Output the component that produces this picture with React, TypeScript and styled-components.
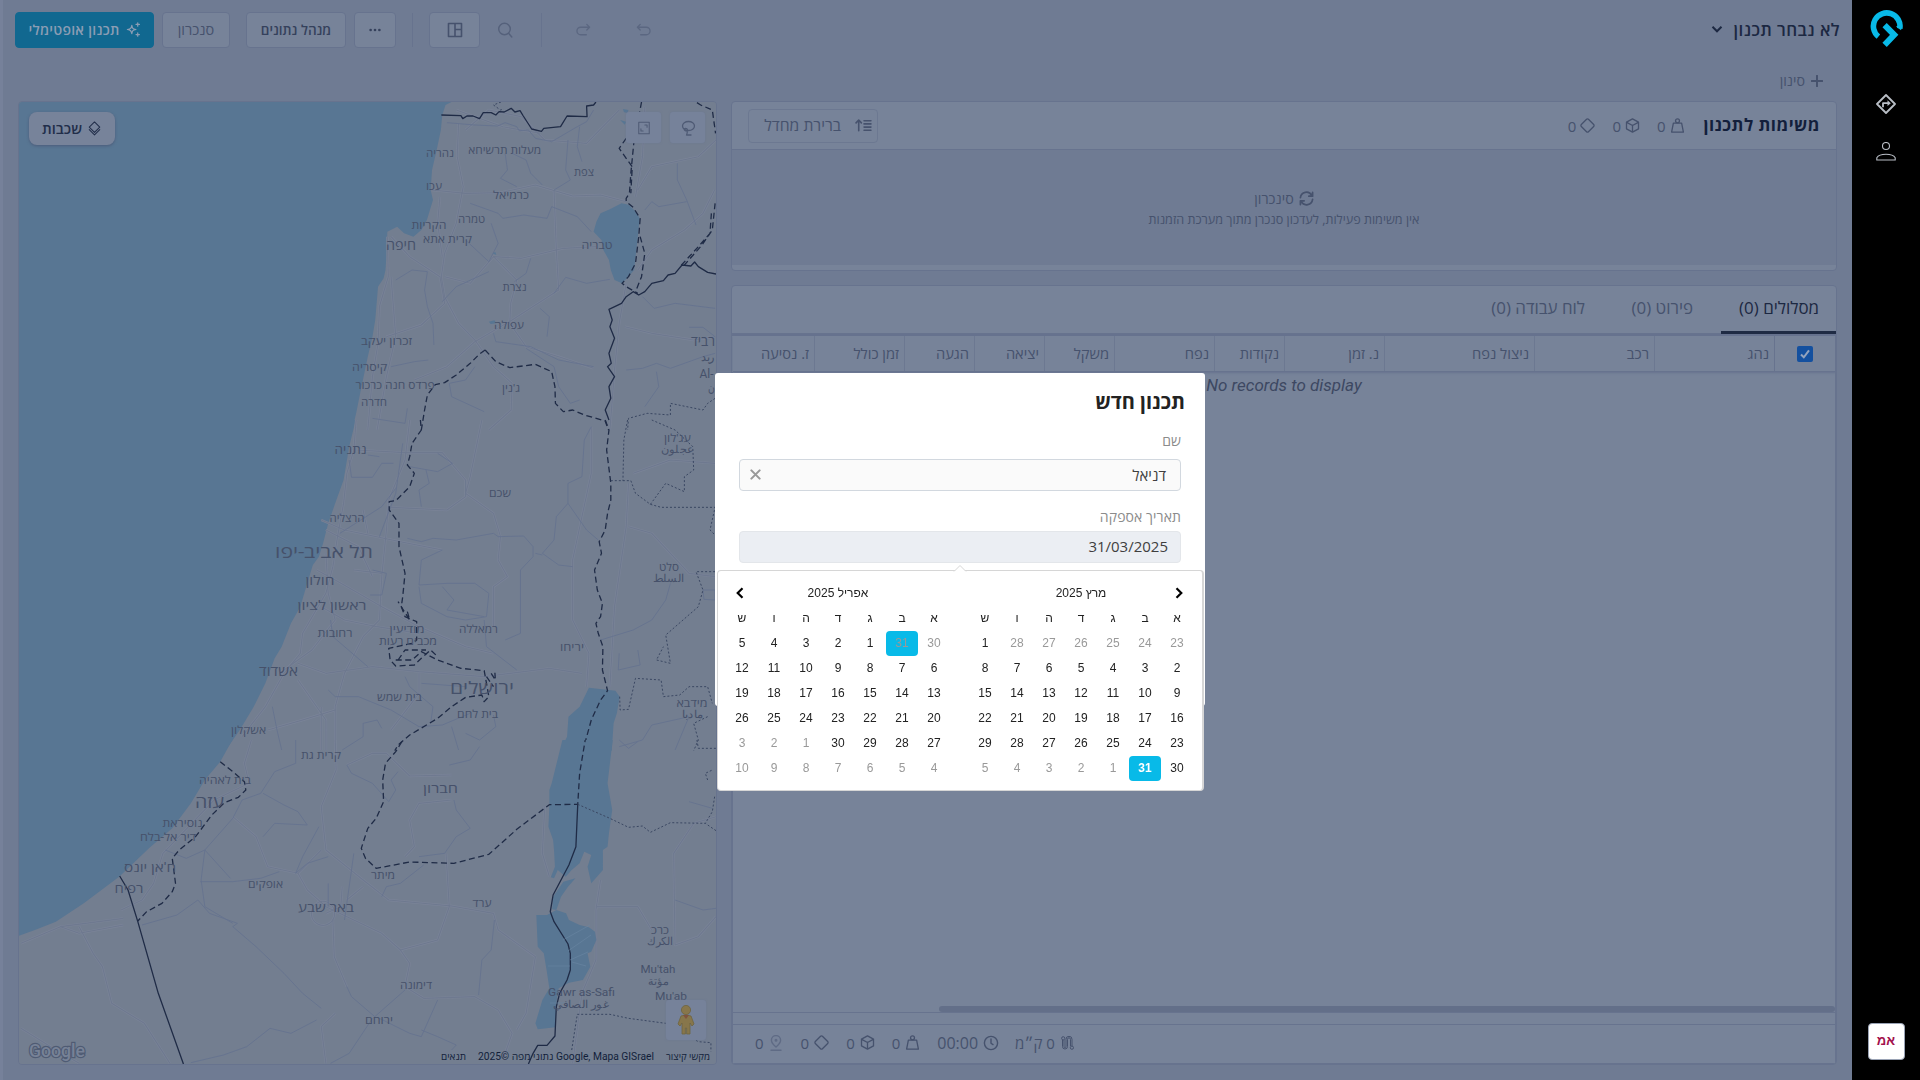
import React from 'react';
import styled, { createGlobalStyle, css } from 'styled-components';

const uiFont = '"Open Sans", "Noto Sans", "Liberation Sans", sans-serif';

const c = {
  page: '#6f7b93',
  edge: '#76819a',
  card: '#778399',
  line: '#67738e',
  lineSoft: '#6c7891',
  text: '#46526d',
  muted: '#4f5b75',
  dark: '#1c2842',
  accent: '#08bae8',
};

const GlobalStyle = createGlobalStyle`
  * { box-sizing: border-box; }
  html, body { margin: 0; padding: 0; }
  body { overflow: hidden; background: ${c.page}; font-family: ${uiFont}; }
  button, input { font-family: inherit; }
  svg { display: block; flex: none; }
`;

const Shell = styled.div`
  direction: rtl;
  display: flex;
  width: 1920px;
  height: 1080px;
  background: ${c.page};
  color: ${c.text};
`;

const Sidebar = styled.aside`
  width: 68px;
  height: 100%;
  flex: none;
  background: #000;
  display: flex;
  flex-direction: column;
  align-items: center;
  padding: 10px 0 20px;
`;

const NavItem = styled.div<{ $gap: number }>`
  margin-top: ${p => p.$gap}px;
`;

const Avatar = styled.div`
  margin-top: auto;
  width: 37px;
  height: 37px;
  border-radius: 4px;
  border: 1px solid #9aa3b5;
  background: #fff;
  color: #a3104c;
  font: bold 13px/34px "Liberation Sans", sans-serif;
  text-align: center;
`;

const Main = styled.main`
  flex: 1;
  min-width: 0;
  display: flex;
  flex-direction: column;
  border-left: 3px solid ${c.edge};
  padding: 12px 13px 15px 12px;
`;

const Toolbar = styled.header`
  display: flex;
  align-items: center;
  height: 36px;
`;

const PlanTitle = styled.h1`
  margin: -2px -1px 0 0;
  font-size: 17px;
  letter-spacing: 0.42px;
  font-weight: 600;
  color: ${c.dark};
  display: flex;
  align-items: center;
  gap: 11px;
  white-space: nowrap;
`;

const Tools = styled.div`
  margin-right: auto;
  display: flex;
  align-items: center;
`;

const Btn = styled.button<{ $w: number; $ml?: number; $primary?: boolean; $strong?: boolean }>`
  width: ${p => p.$w}px;
  height: 36px;
  margin: 0 0 0 ${p => p.$ml ?? 0}px;
  padding: 0 0 1px;
  display: flex;
  align-items: center;
  justify-content: center;
  gap: 6px;
  white-space: nowrap;
  border: 1px solid ${c.line};
  border-radius: 4px;
  background: ${c.card};
  color: ${c.text};
  font-size: 14.5px;
  ${p => p.$strong && css`font-size: 13.5px; font-weight: 600; color: #35415c;`}
  ${p => p.$primary && css`
    background: #116890;
    border-color: #116890;
    color: #8b9db4;
    font-size: 14px;
    letter-spacing: 0.25px;
    font-weight: 600;
  `}
`;

const Slot = styled.span<{ $w: number }>`
  width: ${p => p.$w}px;
  display: flex;
  justify-content: center;
`;

const Divider = styled.span<{ $ml: number }>`
  width: 1px;
  height: 34px;
  background: ${c.line};
  margin-left: ${p => p.$ml}px;
`;

const FilterBar = styled.div`
  height: 53px;
  padding: 12px 16px 0 0;
  display: flex;
  align-items: center;
  gap: 6px;
  font-size: 14.3px;
  color: ${c.text};
`;

const Content = styled.div`
  flex: 1;
  min-height: 0;
  display: flex;
  gap: 14px;
  padding: 0 2px 0 3px;
`;

const Column = styled.section`
  width: 1106px;
  flex: none;
  display: flex;
  flex-direction: column;
  gap: 14px;
`;

const Card = styled.div<{ $h?: number }>`
  ${p => (p.$h ? `height: ${p.$h}px;` : 'flex: 1;')}
  border: 1px solid ${c.line};
  border-radius: 4px;
  background: ${c.card};
  display: flex;
  flex-direction: column;
  overflow: hidden;
`;

const TasksHead = styled.div`
  height: 48px;
  flex: none;
  display: flex;
  align-items: center;
  padding: 0 16px 0 17px;
  border-bottom: 1px solid ${c.line};
`;

const TasksTitle = styled.h2`
  margin: -2px 0 0 19px;
  font-size: 17px;
  letter-spacing: 0.45px;
  font-weight: 700;
  color: #131f3c;
  white-space: nowrap;
`;

const Stat = styled.span<{ $gap?: number; $ml?: number; $size?: number }>`
  display: flex;
  align-items: center;
  gap: ${p => p.$gap ?? 4}px;
  margin-left: ${p => p.$ml ?? 17}px;
  font-size: ${p => p.$size ?? 15}px;
  white-space: nowrap;
`;

const SortButton = styled.button`
  margin: 0 auto 0 -1px;
  width: 130px;
  height: 34px;
  border: 1px solid ${c.lineSoft};
  border-radius: 4px;
  background: transparent;
  color: ${c.text};
  font-size: 15.7px;
  padding: 0 5px 1px 0;
  display: flex;
  align-items: center;
  gap: 14px;
  white-space: nowrap;
`;

const TasksBody = styled.div`
  height: 115px;
  background: ${c.page};
  display: flex;
  flex-direction: column;
  align-items: center;
  padding-top: 38px;
`;

const SyncLine = styled.div`
  height: 20px;
  display: flex;
  align-items: center;
  gap: 5px;
  font-size: 14.3px;
`;

const Hint = styled.div`
  margin-top: 2px;
  font-size: 12.6px;
  line-height: 20px;
`;

const Tabs = styled.div`
  height: 50px;
  flex: none;
  display: flex;
  border-bottom: 3px solid ${c.line};
`;

const Tab = styled.div<{ $w: number; $pad: number; $active?: boolean }>`
  width: ${p => p.$w}px;
  height: 48px;
  padding: 10px ${p => p.$pad}px 0 0;
  font-size: 16.9px;
  white-space: nowrap;
  color: ${p => (p.$active ? c.dark : c.text)};
  border-bottom: 3px solid ${p => (p.$active ? '#1f2b44' : 'transparent')};
`;

const TableHead = styled.div`
  height: 36px;
  flex: none;
  display: flex;
  margin: 0 0 0 1px;
  border-right: 1px solid ${c.line};
  border-bottom: 1px solid ${c.line};
  box-shadow: 0 1px 2px ${c.line};
`;

const Th = styled.div<{ $w: number }>`
  width: ${p => p.$w}px;
  height: 35px;
  flex: none;
  border-left: 1px solid ${c.lineSoft};
  padding-right: 5px;
  font-size: 14.7px;
  line-height: 34px;
  white-space: nowrap;
  &:last-child { border-left: 0; }
`;

const CheckTh = styled(Th)`
  display: flex;
  align-items: center;
  justify-content: center;
  padding: 0;
  border-left-color: ${c.line};
`;

const Check = styled.span`
  width: 16px;
  height: 16px;
  border-radius: 2px;
  background: #14509f;
  color: #93a3bd;
  display: flex;
  align-items: center;
  justify-content: center;
`;

const TableBody = styled.div`
  flex: 1;
  border: solid ${c.line};
  border-width: 0 1px;
  display: flex;
  flex-direction: column;
  align-items: center;
`;

const Empty = styled.div`
  direction: ltr;
  padding-top: 3px;
  font: italic 17px/20px Roboto, sans-serif;
  color: #3d4862;
`;

const Scrollbar = styled.div`
  margin-top: auto;
  align-self: stretch;
  height: 7px;
  border-bottom: 1px solid ${c.line};
`;

const Thumb = styled.div`
  width: 896px;
  height: 6px;
  border-radius: 3px;
  background: #636f89;
`;

const Footer = styled.div`
  height: 51px;
  flex: none;
  padding-top: 11px;
  border: solid ${c.line};
  border-width: 0 1px 1px;
`;

const Totals = styled.div`
  direction: ltr;
  height: 38px;
  border-top: 1px solid ${c.line};
  display: flex;
  align-items: center;
  padding: 0 0 2px 22px;
`;

const MapCard = styled.div`
  position: relative;
  flex: 1;
  height: 964px;
  border: 1px solid ${c.line};
  border-radius: 4px;
  overflow: hidden;
`;

const MapCanvas = styled.svg`
  position: absolute;
  left: 0;
  top: 0;
`;

const LayersButton = styled.div`
  position: absolute;
  left: 10px;
  top: 10px;
  width: 86px;
  height: 33px;
  padding-bottom: 1px;
  border-radius: 8px;
  background: #77839a;
  box-shadow: 0 1px 3px #4b5c7a;
  display: flex;
  align-items: center;
  justify-content: center;
  gap: 5px;
  color: #222e4a;
  font-size: 14.6px;
  font-weight: 600;
`;

const MapButton = styled.div<{ $left: number; $top: number; $h: number }>`
  position: absolute;
  left: ${p => p.$left}px;
  top: ${p => p.$top}px;
  width: ${p => (p.$h > 35 ? 40 : 35)}px;
  height: ${p => p.$h}px;
  border-radius: 3px;
  background: #76829a;
  box-shadow: 0 0 2px #6b7790;
  display: flex;
  align-items: center;
  justify-content: center;
  color: ${c.muted};
`;

const Modal = styled.div`
  position: fixed;
  left: 715px;
  top: 373px;
  width: 490px;
  height: 333px;
  border-radius: 3px;
  background: #fff;
  padding: 15px 24px 0;
  direction: rtl;
`;

const ModalTitle = styled.h2`
  margin: 0 -4px 0 0;
  font-size: 20px;
  line-height: 28px;
  font-weight: 680;
  color: #222;
`;

const Label = styled.label<{ $mt: number }>`
  display: block;
  margin-top: ${p => p.$mt}px;
  font-size: 14px;
  letter-spacing: 0.1px;
  line-height: 20px;
  color: #8b8b8b;
`;

const Field = styled.div<{ $mt: number; $filled?: boolean }>`
  margin-top: ${p => p.$mt}px;
  height: 32px;
  border: 1px solid ${p => (p.$filled ? '#e3e6ea' : '#d2d8df')};
  border-radius: 4px;
  background: ${p => (p.$filled ? '#ebeef3' : '#fafafa')};
  display: flex;
  align-items: center;
  justify-content: space-between;
  padding: 0 14px 1px 10px;
  font-size: 15px;
  color: #3f3f3f;
`;

const DateText = styled.span`
  font-size: 15px;
  margin-right: -2px;
  padding-bottom: 1px;
`;

const Picker = styled.div`
  position: fixed;
  left: 717px;
  top: 570px;
  width: 487px;
  height: 221px;
  border: 1px solid #d6d6d6;
  border-right-width: 2px;
  border-radius: 4px;
  background: #fff;
  direction: rtl;
  padding: 10px 9px 0 8px;
  display: flex;
  justify-content: space-between;
  font-family: "Liberation Sans", sans-serif;
  font-size: 12px;
  color: #222;
`;

const Caret = styled.svg`
  position: absolute;
  left: 235px;
  top: -7px;
`;

const Month = styled.div`
  width: 224px;
`;

const MonthHead = styled.div`
  height: 25px;
  line-height: 25px;
  display: grid;
  grid-template-columns: 32px 1fr 32px;
  text-align: center;
`;

const Arrow = styled.span<{ $side?: 'next' | 'prev' }>`
  display: flex;
  align-items: center;
  justify-content: center;
  padding: 0 0 2px;
  ${p => p.$side === 'next' && css`padding-left: 3px;`}
  ${p => p.$side === 'prev' && css`padding-right: 2px;`}
  color: #000;
`;

const Grid = styled.div`
  display: grid;
  grid-template-columns: repeat(7, 32px);
`;

const Day = styled.span<{ $off?: boolean; $sel?: boolean; $bold?: boolean }>`
  height: 25px;
  line-height: 24px;
  text-align: center;
  border-radius: 4px;
  color: ${p => (p.$off ? '#999' : '#222')};
  ${p => p.$sel && css`background: ${c.accent};`}
  ${p => p.$bold && css`color: #fff; font-weight: bold;`}
`;

type IconProps = { size?: number; sw?: number; color?: string; children?: React.ReactNode };
const Icon = ({ size = 16, sw = 1.4, color = 'currentColor', children }: IconProps) => (
  <svg width={size} height={size} viewBox="0 0 16 16" fill="none" stroke={color} strokeWidth={sw} strokeLinecap="round" strokeLinejoin="round">
    {children}
  </svg>
);

const WeightIcon = (p: IconProps) => (
  <Icon {...p}><circle cx="8" cy="3" r="2.1" /><path d="M3.6 5.4h8.8L14.3 15H1.7z" /></Icon>
);
const CubeIcon = (p: IconProps) => (
  <Icon {...p}><path d="M8 .9 14.4 4.4v7.2L8 15.1 1.6 11.6V4.4zM1.8 4.6 8 8l6.2-3.4M8 8v7" /></Icon>
);
const DiamondIcon = (p: IconProps) => (
  <Icon {...p}><path d="M7 1.4a1.4 1.4 0 0 1 2 0L14.6 7a1.4 1.4 0 0 1 0 2L9 14.6a1.4 1.4 0 0 1-2 0L1.4 9a1.4 1.4 0 0 1 0-2z" /></Icon>
);
const ClockIcon = (p: IconProps) => (
  <Icon {...p}><circle cx="8" cy="8" r="6.6" /><path d="M8 4v4.2l2 1.4" /></Icon>
);
const RouteIcon = () => (
  <svg width="13" height="14" viewBox="0 0 13 14" fill="none" stroke="currentColor" strokeWidth="1">
    <circle cx="2.200" cy="2.300" r="1.600" /><circle cx="10.900" cy="11.700" r="1.600" />
    <path d="M1.500 4v6.500a2.500 2.500 0 0 0 5 0V3.300a1.500 1.500 0 0 1 3 0V10M3 4v6.500a1 1 0 0 0 2 0V3.300a3 3 0 0 1 6 0V10" />
  </svg>
);
const PinIcon = (p: IconProps) => (
  <Icon {...p}><path d="M8 12C5 9.400 3.400 7.400 3.400 5.200a4.600 4.600 0 0 1 9.200 0C12.600 7.400 11 9.400 8 12z" /><circle cx="8" cy="5.200" r=".8" fill="currentColor" /><path d="M3 15.200h10" /></Icon>
);
const SyncIcon = () => (
  <Icon size={15} sw={1.8}><path d="M1.500 7A6.500 6.500 0 0 1 13.600 4.600M14.500 1.500v4h-4M14.500 9A6.500 6.500 0 0 1 2.400 11.400M1.500 14.500v-4h4" /></Icon>
);
const SparkIcon = () => (
  <Icon size={15} sw={1.3}>
    <path d="M6.200 3.500C6.800 6.800 7.200 7.400 10.600 8 7.200 8.700 6.800 9.200 6.200 12.500 5.500 9.200 5 8.700 1.500 8 5 7.400 5.500 6.800 6.200 3.500zM12.500.8v3.600M10.700 2.600h3.600M12.500 11.600v3.600M10.700 13.400h3.600" />
  </Icon>
);
const LayersIcon = () => (
  <Icon size={15} sw={1.1}><path d="M8 1 13.600 6.600 8 12.200 2.400 6.600zM2.400 9.200 8 14.800l5.600-5.600" /></Icon>
);
const Chevron = ({ size, d, sw }: { size: number; d: string; sw: number }) => (
  <svg width={size} height={size} viewBox="0 0 12 12" fill="none" stroke="currentColor" strokeWidth={sw}><path d={d} /></svg>
);

const Logo = () => (
  <svg width="36" height="38" viewBox="-2 0 36 38" fill="none" stroke={c.accent}>
    <path d="M8.400 26.600A13.300 13.300 0 1 1 29.800 18.500" strokeWidth="5.600" />
    <path d="m26 16.500 5 3.700q1.300-2.600 1.200-6z" fill={c.accent} stroke="none" />
    <path d="M14.600 15.200 24.200 24.800 14.600 34.800" strokeWidth="6" />
  </svg>
);
const DirectionsIcon = () => (
  <svg width="20" height="20" viewBox="0 0 20 20" fill="none" stroke="#b9bec6" strokeWidth="1.800" strokeLinejoin="round">
    <path d="M10 1 19 10 10 19 1 10z" /><path d="M7 13.200V9.200h5" /><path d="m11.500 6.300 3.300 2.900-3.300 2.900z" fill="#b9bec6" stroke="none" />
  </svg>
);
const PersonIcon = () => (
  <svg width="20" height="19" viewBox="0 0 20 19" fill="none" stroke="#b9bec6" strokeWidth="1.100">
    <circle cx="10" cy="4" r="3.500" /><path d="M.8 18v-2.200C2.500 13 6.500 12.300 10 12.300s7.500.7 9.200 3.500V18z" />
  </svg>
);

/* Each tile keeps its own survey grid; the transform projects it onto the map pane. */
const tileScale = 730 / 1568;
type Tile = { y: number; sea: string; lakes: string[]; roads: string[]; minor: string[]; solid: string[]; dashed: string[]; dotted: string[] };
const tiles: Tile[] = [
  {
    y: 90,
    sea: 'M38 30H978L957 45 950 75 947 120 938 180 928 240 925 300 930 330 917 390 905 420 888 440 868 430 853 410 832 425 830 500 828 540 824 565 812 590 806 690 800 740 790 800 775 900 765 970 756 1022H38Z',
    lakes: [
      'M1335 340 1350 344 1366 365 1374 385 1370 440 1366 490 1362 540 1350 560 1336 580 1320 570 1312 540 1308 510 1296 480 1292 450 1275 425 1281 395 1290 370 1310 358Z',
      'M1338 57 1350 60 1348 70 1340 66Z', 'M1332 90 1345 95 1342 104Z', 'M1050 695 1062 691 1066 700 1054 702Z', 'M1058 490 1064 486 1066 495Z',
    ],
    roads: [
      'M985 100 982 200 995 290 980 400 955 490 948 560 955 620 985 700 1020 750 1060 830 1100 880 1098 960 1050 1020',
      'M832 440 834 560 815 650 812 760 800 860 790 1020', 'M928 300 1000 310 1075 308 1150 285 1230 318 1290 315 1345 335',
      'M955 560 1010 580 1060 500 1120 505 1210 475 1280 470M1370 540 1400 480 1470 420 1510 370 1535 300',
      'M1060 500 1110 570 1097 640 1095 700 1130 770 1200 800 1275 835', 'M1190 300 1195 480 1200 600 1100 690 1020 755 960 830 890 870',
      'M830 740 905 705 955 640 945 560 880 500 840 440', 'M1370 300 1400 230 1500 200 1538 150', 'M1345 580 1330 700 1320 840 1310 1020',
      'M1342 710 1400 730 1490 750 1536 740', 'M840 560 850 740 830 860 810 1020', 'M945 320 940 400 950 500',
      'M1000 120 1050 60 1120 80 1170 150 1260 160 1330 60', 'M980 60 1080 110 1160 130', 'M1385 50 1380 200 1365 320',
    ],
    minor: [
      'M960 98 1020 105 1068 108 1085 98 1110 110 1115 122 1135 120 1150 145 1185 155 1240 110 1260 95 1275 60',
      'M1100 190 1130 210 1140 250 1165 285M1085 190 1090 240 1075 265 1110 290', 'M1010 340 1070 370 1080 385 1125 375 1175 385 1185 350 1240 380 1270 425',
      'M1055 400 1070 460 1050 515 1000 450M1140 505 1130 550 1105 575', 'M850 570 885 540 918 545 912 600 918 650 930 700 932 765',
      'M1455 220 1455 270 1475 330 1495 405M1385 360 1400 335 1415 350 1475 335', 'M1190 610 1215 562 1260 580 1310 568',
      'M1160 655 1180 680 1175 740M1060 730 1065 755 1140 770 1200 810 1275 830', 'M1130 775 1190 830 1200 890 1225 940 1245 930',
      'M1345 840 1380 835 1410 820 1440 835 1510 800 1536 790', 'M1380 620 1405 655 1450 640 1536 655', 'M1020 830 1000 870 965 880 970 920 1040 965',
      'M800 985 870 1000 875 955M840 830 890 815 920 810M1410 845 1415 890 1385 950', 'M1245 110 1240 170 1250 215M1220 150 1215 240 1225 270 1190 300',
      'M1480 712 1510 712 1536 740M950 635 980 590 1050 545',
    ],
    solid: [
      'M948 75 990 77 994 86 1003 78 1016 78 1030 86 1038 68 1055 68 1065 75 1072 65 1083 66 1098 55 1106 66 1117 62 1124 78 1142 117 1163 124 1168 115 1204 110 1218 78 1261 80 1260 48 1275 45 1280 36',
      'M1538 552 1520 547 1500 530 1492 516 1484 528 1465 525 1450 550 1435 555 1425 572 1400 580 1385 605 1372 615 1360 605 1345 620 1335 640 1308 658 1315 690 1310 710 1320 745 1308 790 1313 820 1305 830 1320 860 1308 890 1312 925 1300 960 1308 990',
    ],
    dashed: [
      'M1378 36 1372 80 1362 150 1355 250 1352 310 1345 325 1345 335 1360 352 1375 385 1372 440 1365 520 1350 560 1336 580 1345 590 1370 610', 'M1345 145 1330 175 1345 205 1358 230 1355 310',
      'M1375 440 1385 490 1378 560 1365 605', 'M1497 38 1505 45 1530 60 1537 130', 'M1536 340 1530 420 1508 465 1470 525M1528 370 1525 430 1500 470 1462 528',
      'M1042 780 1030 792 1010 820 980 855 955 878 935 884 918 915 912 960 905 1020', 'M1042 780 1065 815 1095 833 1150 823 1185 845 1192 890 1193 940 1210 965 1230 960 1255 975 1300 993 1307 1020',
    ],
    dotted: ['M1076 36 1060 45 1075 60 1082 57', 'M1536 925 1520 940 1510 960 1440 940 1440 975 1390 970 1350 985 1348 1020'],
  },
  {
    y: 420,
    sea: 'M38 0H764L750 80 738 180 720 250 705 310 694 370 685 410 672 435 660 490 645 560 625 610 605 680 590 715 570 790 545 860 515 930 484 992H38Z',
    lakes: ['M1265 803 1322 812 1331 830 1325 880 1318 910 1314 992H1203L1218 950 1221 890 1245 860Z'],
    roads: [
      'M765 0 760 90 745 160 738 250 725 350 715 440 700 520 650 640 645 700 610 760 570 860 520 950', 'M880 0 870 120 835 240 830 330 820 470 815 600 780 650 740 760 720 860 720 990',
      'M690 300 740 330 860 365 950 390', 'M765 90 870 98 950 98 1000 180 1000 230 960 270 840 262', 'M1035 0 1010 170 1000 220 1060 280 1075 350 1070 420 1090 470 1060 500 1060 620',
      'M680 450 720 480 770 520 820 560 900 620 1000 680 1060 700', 'M690 560 740 600 810 620 900 640', 'M640 730 700 760 800 740 900 755 1040 770 1180 745 1250 760',
      'M700 400 705 520 720 600 670 690 600 760', 'M1350 190 1345 320 1320 560 1310 800', 'M1350 320 1400 340 1480 460 1536 470', 'M1270 20 1270 160 1230 420 1230 600 1265 700 1260 800',
      'M575 930 650 900 720 870M690 860 690 990M640 780 700 900 700 990', 'M1360 160 1440 120 1536 130', 'M840 930 900 820 900 760', 'M780 270 790 340M760 450 820 460M700 330 770 380 800 470',
    ],
    minor: [
      'M750 120 755 172 800 172 820 130 845 130M790 105 815 110', 'M880 140 940 155 972 130 940 100M865 70 850 220 815 350', 'M915 150 922 190 900 210 905 260',
      'M875 355 905 365 930 355 980 360 1060 340 1070 350 1125 348 1145 380 1145 410 1118 450 1118 640 1085 660', 'M1270 20 1255 60 1250 170 1220 190 1220 250 1195 290 1190 360 1165 400 1200 435 1230 440',
      'M1220 250 1260 330 1285 360M950 390 905 420 900 495 960 490 1020 490 1050 520 1045 590 1000 600 960 590 905 550 900 500', 'M950 500 975 540 960 570 1040 590',
      'M1440 490 1430 540 1400 600 1360 630 1290 660', 'M1330 700 1328 750 1375 735 1370 690', 'M1040 600 1045 680 1110 750', 'M710 600 715 650 790 740M800 450 830 460 820 525 795 525',
      'M705 810 720 830 770 830 840 870 900 920 950 915 1010 880', 'M870 770 880 800 930 860 925 910M905 790 1000 800', 'M585 860 595 930 605 990M735 990 780 950 780 910 810 900 820 925',
      'M1060 885 1065 920 1030 960 1000 940M970 920 985 990', 'M730 340 820 260 850 205M1330 980 1380 960 1400 915 1480 890 1450 990', 'M1510 510 1536 510 1536 540 1512 538ZM1150 400 1165 405',
    ],
    solid: [],
    dashed: [
      'M903 0 905 30 885 70 880 110 875 135 890 160 880 200 850 242 836 245 836 270 857 310 857 380 870 460 865 530 862 560 870 590 895 605 895 660 885 670 835 685 838 720 850 738 890 735 905 715 925 690 940 710',
      'M875 575 880 600 855 545M855 720 870 690 915 690M850 720 885 720 905 695 940 720 990 745 1040 752 1045 790 1050 830 1040 845 1035 825 1000 832 970 860 940 895 880 945 855 975 848 992', 'M1055 760 1064 780 1063 758M1045 770 1060 800',
      'M1300 0 1308 30 1303 90 1312 190 1312 240 1305 280 1300 330 1287 365 1292 400 1277 450 1283 510 1294 550 1290 590 1280 610 1285 640 1295 680 1294 750 1305 812 1290 840 1270 900 1252 992',
    ],
    dotted: [
      'M1312 182 1355 182 1365 220 1397 253 1430 190 1470 215 1470 170 1490 150 1488 80 1450 30 1400 0', 'M1397 253 1420 262 1536 262 1525 330 1536 345', 'M1536 455 1495 455 1510 510 1500 560 1430 645 1440 730 1410 720 1425 680',
      'M1348 0 1340 60 1338 182', 'M1331 830 1332 870 1350 868 1365 775 1420 780 1425 830 1460 825 1480 800 1520 800 1530 850', 'M1520 890 1490 910 1500 960 1490 992',
    ],
  },
  {
    y: 740,
    sea: 'M38 0H499L473 65 440 120 410 190 370 265 320 325 256 410 180 490 120 545 75 570 40 588H38Z',
    lakes: [
      'M1208 0H1316L1305 130 1315 210 1308 280 1305 320 1295 330 1295 390 1270 430 1262 380 1270 345 1255 335 1245 370 1228 390 1215 410 1198 390 1190 415 1183 412 1192 380 1190 330 1188 300 1178 260 1180 200 1180 150 1185 130Z',
      'M1210 425 1236 415 1220 440 1205 470 1195 510 1186 508 1188 470Z',
      'M1152 525H1175L1195 510 1216 520 1222 540 1245 555 1265 562 1278 575 1281 600 1270 635 1262 640 1268 680 1252 720 1222 728 1200 745 1195 790 1193 862 1155 868 1150 850 1165 780 1180 745 1174 690 1168 640 1155 620Z',
    ],
    roads: [
      'M540 0 525 70 535 130 460 180 350 340 330 430 305 480 260 510', 'M45 610 130 560 265 535M130 560 170 580 265 555M170 560 200 640 220 680 240 790 310 850 365 970',
      'M720 0 722 90 690 200 700 330 780 420 835 480 970 498 1060 520 1070 570 1150 650', 'M500 230 550 290 575 380 640 400 690 330', 'M640 400 660 450 700 500 760 540 820 580 860 630 880 670 870 740 910 775 1020 770 1070 810 1100 880 1080 960',
      'M745 75 800 40 830 40 880 108 970 105M970 180 900 190 880 240 890 320 870 350', 'M958 340 965 500 940 600 860 630', 'M715 540 718 650 745 740', 'M720 820 690 860 700 970', 'M1170 200 1165 340 1180 410M1290 420 1280 510 1280 660 1250 760 1230 970',
      'M1280 500 1370 500 1400 570M1538 530 1500 590 1450 615 1447 340 1490 250 1538 230', 'M735 440 732 500 700 520M680 490A25 36 0 1 1 679 491', 'M1150 650 1130 820 1110 870', 'M45 865 120 930 170 970', 'M780 440 745 480',
    ],
    minor: [
      'M635 0 635 70 590 95 560 160 520 180 500 235 440 330 432 420 440 500 500 550', 'M565 160 610 195 640 215 660 255 590 250 565 290', 'M685 260 650 350 635 400M705 350 660 370 635 400',
      'M745 75 755 100 800 130 835 185 850 150 840 120 855 95', 'M1030 20 1010 60 965 75M975 180 980 210 1010 265 980 290 955 340 900 350', 'M430 425 500 425 560 415 600 395M495 415 440 330 400 355 355 330',
      'M305 555 380 525 425 480 450 520 510 550 500 560 550 620 610 700 650 760 690 805', 'M680 840 625 880 580 865 530 920 480 945 410 968', 'M745 740 755 770 805 830 870 750M800 835 750 940 710 970',
      'M815 835 880 880 905 890 940 780M905 870 940 890 980 915 970 930', 'M1062 540 1055 630 1035 660 1028 765', 'M820 470 830 440 860 430 910 375', 'M1480 185 1530 205M1450 480 1510 510 1538 505M1330 0 1350 25 1370 5', 'M760 340 740 540M705 430 705 500',
    ],
    solid: [
      'M257 408 275 450 296 545 340 760 394 972', 'M1241 193 1237 320 1222 375 1188 465 1182 515 1190 545 1220 612 1225 640 1225 690 1218 720 1202 760 1195 800 1192 888 1175 916 1155 916 1145 940 1135 972',
    ],
    dashed: [
      'M473 65 500 95 525 125 528 150 512 172 482 188 455 225 420 290 385 330 370 355 377 430 370 455 348 490 315 515 296 543',
      'M863 5 850 35 828 70 822 120 824 185 808 235 790 265 776 325 785 355 808 385 880 366 975 370 1050 343 1110 268 1180 194 1241 193 1245 100 1257 0',
    ],
    dotted: ['M1241 193 1310 235 1350 262 1380 258 1397 277 1440 248 1515 250 1538 272', 'M1535 170 1530 215 1515 250', 'M1228 930 1240 823 1310 823 1350 835 1430 850 1500 905 1527 908 1527 935', 'M1497 0 1500 25 1538 25M1520 120 1515 100 1530 90'],
  },
];

const labels: [string, number, number, number, number][] = [
  ['נהריה', 440, 157, 28, 11], ['מעלות תרשיחא', 504.700, 154, 73, 11], ['צפת', 584, 176, 20, 11], ['עכו', 434, 190, 16, 11], ['כרמיאל', 511, 199, 36, 11],
  ['טמרה', 471.600, 223, 27, 11], ['הקריות', 429, 229, 35, 11], ['קרית אתא', 447.500, 243, 49, 11], ['חיפה', 401, 250, 30, 14], ['טבריה', 597, 249, 31, 11],
  ['נצרת', 514.500, 291, 24, 11], ['עפולה', 509, 329, 30, 11], ['זכרון יעקב', 386.500, 345, 51, 11], ['קיסריה', 369.600, 371, 35, 11], ['פרדס חנה כרכור', 395, 389, 79, 11],
  ['חדרה', 374, 406, 26, 11], ["ג'נין", 511, 392, 18, 11], ['רביד', 703, 346, 24, 14], ['ربد', 708, 361, 14, 12], ['Al-', 706.500, 378, 14, 12], ['ن', 711, 392, 7, 12],
  ['נתניה', 350.600, 454, 32, 13], ['הרצליה', 347, 522, 35, 11], ['תל אביב-יפו', 324, 558, 98, 17], ['חולון', 320, 585, 29, 13], ['ראשון לציון', 332, 610, 69, 13],
  ['רחובות', 335, 637, 35, 11], ['אשדוד', 278.500, 676, 39, 14], ['אשקלון', 248.600, 734, 35, 11], ['שכם', 500, 497, 22, 11], ['מודיעין', 407, 633, 35, 11], ['מכבים רעות', 408, 645, 58, 11],
  ['רמאללה', 478.500, 633, 39, 11], ['ירושלים', 482, 694, 64, 17], ['בית שמש', 399.500, 701, 45, 11], ['בית לחם', 477.600, 718, 41, 11], ['יריחו', 572, 651, 24, 11],
  ["עג'לון", 677.500, 442, 27, 11], ['عجلون', 677.500, 453, 33, 11], ['סלט', 669, 571, 20, 11], ['السلط', 668.500, 582, 31, 11], ['מידבא', 692, 707, 31, 11], ['مادبا', 692.500, 718, 21, 11],
  ['קרית גת', 321, 759, 40, 11], ['בית לאהיה', 225, 784, 52, 11], ['עזה', 209.500, 808, 29, 17], ['נוסיראת', 182.500, 827, 40, 11], ['דיר אל-בלח', 168, 841, 56, 11],
  ["ח'אן יונס", 150, 872, 52, 13], ['רפיח', 129, 893, 29, 13], ['אופקים', 265.500, 888, 35, 11], ['באר שבע', 326, 912, 56, 13], ['חברון', 440.500, 793, 35, 13], ['מיתר', 383, 879, 24, 11],
  ['ערד', 482, 907, 19, 11], ['דימונה', 416, 989, 32, 11], ['ירוחם', 379, 1024, 28, 11], ['כרכ', 660, 934, 18, 11], ['الكرك', 660, 945, 26, 11], ["Mu'tah", 658, 973, 35, 11],
  ['مؤتة', 658, 985, 21, 11], ['Gawr as-Safi', 581.500, 996, 67, 11], ['غور الصافي', 581, 1008, 56, 11], ["Mu'ab", 671, 1000, 32, 11],
];

const Paths = ({ list }: { list: string[] }) => (
  <>{list.map(d => <path key={d} d={d} vectorEffect="non-scaling-stroke" />)}</>
);

const MapPane = () => (
  <MapCard>
    <MapCanvas width="698" height="962" viewBox="19 102 698 962" direction="ltr" fontFamily='Roboto, "Open Sans", "Noto Sans", sans-serif'>
      <rect x="0" y="90" width="730" height="990" fill="#737e90" />
      {tiles.map(t => (
        <g key={t.y} transform={`translate(0 ${t.y}) scale(${tileScale} ${1 / 3})`} fill="none" strokeLinejoin="round">
          <path d={t.sea} fill="#587693" />
          <g stroke="#7b8498" strokeWidth="2.400"><Paths list={t.roads} /></g>
          <g stroke="#6e798f" strokeWidth="1.100"><Paths list={t.roads} /></g>
          <g stroke="#65738f" strokeWidth="0.900"><Paths list={t.minor} /></g>
          {t.lakes.map(d => <path key={d} d={d} fill="#587693" />)}
          <g stroke="#1f2b46" strokeWidth="1.300"><Paths list={t.solid} /></g>
          <g stroke="#1f2b46" strokeWidth="1.300" strokeDasharray="6 3.500"><Paths list={t.dashed} /></g>
          <g stroke="#3a4762" strokeWidth="1" strokeDasharray="2 2"><Paths list={t.dotted} /></g>
        </g>
      ))}
      <g stroke="#6a87a3" strokeWidth=".6"><path d="M563 940 590 925M568 951 591 935M570 960 588 952M548 966H570M550 1003H566M572 962 586 966" /></g>
      <g textAnchor="middle" fill="#46516a">
        {labels.map(([t, x, y, w, s]) => (
          <text key={t} x={x} y={y} fontSize={s} textLength={w} lengthAdjust="spacingAndGlyphs">{t}</text>
        ))}
      </g>
      <text x="29" y="1057" fontSize="19" fontWeight="500" fill="#778297" stroke="#4f5b73" strokeWidth="2.400" paintOrder="stroke" textLength="56" lengthAdjust="spacingAndGlyphs">Google</text>
      <g fontSize="10" fill="#121e3a" textAnchor="middle">
        <text x="453.500" y="1060" textLength="25" lengthAdjust="spacingAndGlyphs">תנאים</text>
        <text x="566" y="1060" textLength="176" lengthAdjust="spacingAndGlyphs">נתוני מפה ©2025 Google, Mapa GISrael</text>
        <text x="688" y="1060" textLength="44" lengthAdjust="spacingAndGlyphs">מקשי קיצור</text>
      </g>
    </MapCanvas>
    <LayersButton><LayersIcon />שכבות</LayersButton>
    <MapButton $left={607} $top={10} $h={31}>
      <Icon size={14} sw={1.200}><path d="M2 1.500h12v13H2zM9 4.500h2.500V7M4.500 9v2.500H7" /></Icon>
    </MapButton>
    <MapButton $left={651} $top={10} $h={31}>
      <Icon size={16} sw={1.300}><ellipse cx="8.500" cy="6" rx="6" ry="4.500" /><path d="M4.500 9c-.6 1.600 1.700 2.400 2.600 1.200S6 8 5 8.600M7.200 10.500c.2 1.500.2 3-.7 4.500H11" /></Icon>
    </MapButton>
    <MapButton $left={647} $top={898} $h={40}>
      <svg width="18" height="30" viewBox="0 0 18 30" fill="#87764b" stroke="#6f6440" strokeWidth=".8">
        <path d="M4 11q5-2 10 0l3 8-2 2-2-3v11H9.600v-6H8.400v6H5V18l-2 3-2-2z" /><circle cx="9" cy="5" r="4.600" /><path d="m6 10 3 4 3-4z" fill="#80533f" stroke="none" />
      </svg>
    </MapButton>
  </MapCard>
);

const columns: [string, number][] = [
  ['נהג', 120], ['רכב', 120], ['ניצול נפח', 150], ['נ. זמן', 100], ['נקודות', 70], ['נפח', 100],
  ['משקל', 70], ['יציאה', 70], ['הגעה', 70], ['זמן כולל', 90], ['ז. נסיעה', 80],
];

const weekdays = ['א', 'ב', 'ג', 'ד', 'ה', 'ו', 'ש'];

const range = (from: number, to: number) => Array.from({ length: to - from + 1 }, (_, i) => from + i);

type MonthViewProps = { title: string; before: number[]; days: number; after: number[]; selected: number; side: 'prev' | 'next' };
const MonthView = ({ title, before, days, after, selected, side }: MonthViewProps) => {
  const cells = [
    ...before.map(n => ({ n, off: true })),
    ...range(1, days).map(n => ({ n, off: false })),
    ...after.map(n => ({ n, off: true })),
  ];
  return (
    <Month>
      <MonthHead>
        <Arrow $side="next">{side === 'next' && <Chevron size={12} sw={2.200} d="M3.500 1.200 8.300 6 3.500 10.800" />}</Arrow>
        <span>{title}</span>
        <Arrow $side="prev">{side === 'prev' && <Chevron size={12} sw={2.200} d="M7.500 1.200 2.700 6 7.500 10.800" />}</Arrow>
      </MonthHead>
      <Grid>
        {weekdays.map(d => <Day key={d}>{d}</Day>)}
        {cells.map((cell, i) => (
          <Day key={i} $off={cell.off} $sel={i === selected} $bold={i === selected && !cell.off}>{cell.n}</Day>
        ))}
      </Grid>
    </Month>
  );
};

export default function App() {
  return (
    <Shell>
      <GlobalStyle />
      <Sidebar>
        <Logo />
        <NavItem $gap={46}><DirectionsIcon /></NavItem>
        <NavItem $gap={28}><PersonIcon /></NavItem>
        <Avatar>אמ</Avatar>
      </Sidebar>
      <Main>
        <Toolbar>
          <PlanTitle>
            לא נבחר תכנון
            <Chevron size={12} sw={2} d="M1.500 3.800 6 8.300 10.500 3.800" />
          </PlanTitle>
          <Tools>
            <Slot $w={61}><Icon size={15} color="#5b6781"><path d="M4.500 1.500 1.500 4.500l3 3M1.500 4.500H11a3.500 3.500 0 0 1 0 8H5" /></Icon></Slot>
            <Slot $w={60}><Icon size={15} color="#5b6781"><path d="m11.500 1.500 3 3-3 3M14.500 4.500H5a3.500 3.500 0 0 0 0 8h6" /></Icon></Slot>
            <Slot $w={11} />
            <Divider $ml={27} />
            <Slot $w={18}><Icon size={16} color="#55617b"><circle cx="7.500" cy="7" r="5.800" /><path d="m11.800 11.500 3 3.500" /></Icon></Slot>
            <Slot $w={16} />
            <Btn $w={51} $ml={16}><Icon size={16} sw={1.600} color="#46526d"><path d="M1.500 1.500h13v13h-13zM8 1.500v13M8 7.500h6.500" /></Icon></Btn>
            <Divider $ml={16} />
            <Btn $w={42} $ml={8}><Icon size={14} sw={0} color="#35415c"><g fill="#35415c"><circle cx="3" cy="8" r="1.500" /><circle cx="8" cy="8" r="1.500" /><circle cx="13" cy="8" r="1.500" /></g></Icon></Btn>
            <Btn $w={100} $ml={16} $strong>מנהל נתונים</Btn>
            <Btn $w={68} $ml={8}>סנכרון</Btn>
            <Btn $w={139} $primary><SparkIcon />תכנון אופטימלי</Btn>
          </Tools>
        </Toolbar>
        <FilterBar>
          <Icon size={12} sw={2.600}><path d="M8 1v14M1 8h14" /></Icon>
          סינון
        </FilterBar>
        <Content>
          <Column>
            <Card $h={170}>
              <TasksHead>
                <TasksTitle>משימות לתכנון</TasksTitle>
                <Stat><WeightIcon size={15} />0</Stat>
                <Stat><CubeIcon size={15} />0</Stat>
                <Stat><DiamondIcon size={15} />0</Stat>
                <SortButton>
                  <Icon size={17} sw={1.500}><path d="M8.500 3.500H15M8.500 6.500H15M8.500 9.500H15M8.500 12.500H15M3.500 13V3M1 5.500 3.500 2.800 6 5.500" /></Icon>
                  ברירת מחדל
                </SortButton>
              </TasksHead>
              <TasksBody>
                <SyncLine><SyncIcon />סינכרון</SyncLine>
                <Hint>אין משימות פעילות, לעדכון סנכרן מתוך מערכת הזמנות</Hint>
              </TasksBody>
            </Card>
            <Card>
              <Tabs>
                <Tab $w={115} $pad={17} $active>מסלולים (0)</Tab>
                <Tab $w={107} $pad={28}>פירוט (0)</Tab>
                <Tab $w={127} $pad={29}>לוח עבודה (0)</Tab>
              </Tabs>
              <TableHead>
                <CheckTh $w={61}>
                  <Check><Chevron size={12} sw={2} d="M2 6.500 4.800 9.300 10 2.300" /></Check>
                </CheckTh>
                {columns.map(([t, w]) => <Th key={t} $w={w}>{t}</Th>)}
              </TableHead>
              <TableBody>
                <Empty>No records to display</Empty>
                <Scrollbar><Thumb /></Scrollbar>
              </TableBody>
              <Footer>
                <Totals>
                  <Stat $ml={0}>0<PinIcon size={16} color="#5f6b85" /></Stat>
                  <Stat $gap={5} $ml={17}>0<DiamondIcon size={15} /></Stat>
                  <Stat $gap={5} $ml={17}>0<CubeIcon size={15} /></Stat>
                  <Stat $gap={5} $ml={17}>0<WeightIcon size={15} /></Stat>
                  <Stat $gap={5} $ml={17} $size={16}>00:00<ClockIcon size={16} /></Stat>
                  <Stat $gap={6} $ml={16}><span dir="rtl">0 ק״מ</span><RouteIcon /></Stat>
                </Totals>
              </Footer>
            </Card>
          </Column>
          <MapPane />
        </Content>
      </Main>
      <Modal>
        <ModalTitle>תכנון חדש</ModalTitle>
        <Label $mt={15}>שם</Label>
        <Field $mt={8}>
          דניאל
          <Icon size={11} sw={3} color="#999"><path d="m2 2 12 12M14 2 2 14" /></Icon>
        </Field>
        <Label $mt={16}>תאריך אספקה</Label>
        <Field $mt={4} $filled><DateText>31/03/2025</DateText></Field>
      </Modal>
      <Picker>
        <Caret width="14" height="8" viewBox="0 0 14 8"><path d="M1 7.500 7 1.500 13 7.500" fill="#fff" stroke="#d6d6d6" /><path d="M1.500 8h11" stroke="#fff" /></Caret>
        <MonthView title="מרץ 2025" before={range(23, 28)} days={31} after={range(1, 5)} selected={36} side="next" />
        <MonthView title="אפריל 2025" before={[30, 31]} days={30} after={range(1, 10)} selected={1} side="prev" />
      </Picker>
    </Shell>
  );
}
